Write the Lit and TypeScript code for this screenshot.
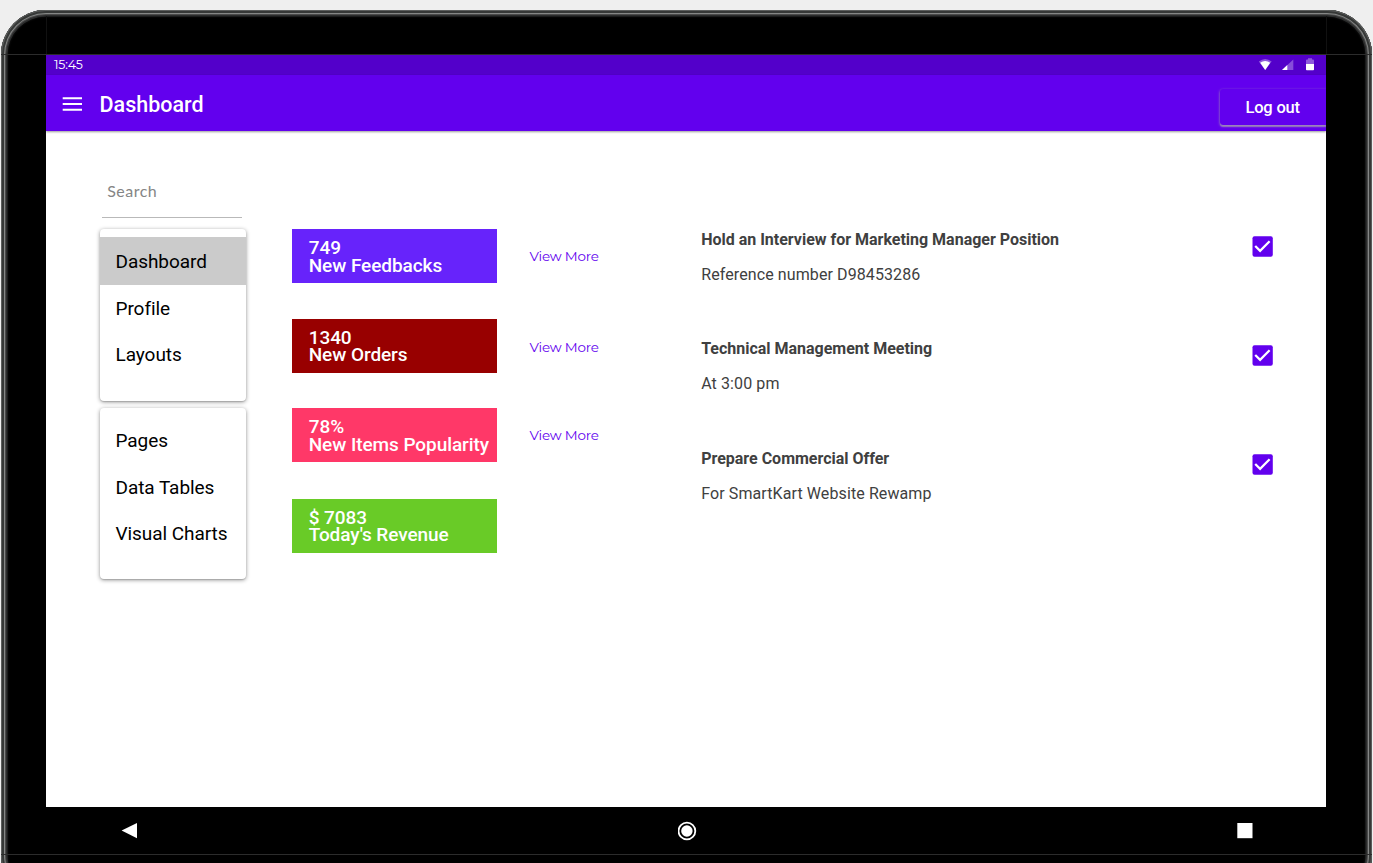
import { LitElement, html, css } from "lit";
import { customElement, property } from "lit/decorators.js";

@customElement("side-menu")
class SideMenu extends LitElement {
  @property({ attribute: false }) items: string[] = [];
  @property() active = "";

  static styles = css`
    :host {
      display: block;
      box-sizing: border-box;
      background: #fff;
      border-radius: 4px;
      box-shadow: 0 1px 4px rgba(0, 0, 0, 0.42), 0 1px 1px rgba(0, 0, 0, 0.12);
    }
    .item {
      height: 46.5px;
      line-height: 48px;
      padding-left: 16px;
      font-size: 19px;
      letter-spacing: -0.06px;
      color: #000;
      white-space: nowrap;
    }
    .item:nth-child(2) { line-height: 47px; }
    .active + .item:nth-child(2) { line-height: 48.2px; }
    .active {
      height: 47.5px;
      line-height: 50px;
      background: #cbcbcb;
    }
  `;

  render() {
    return this.items.map(
      (t) => html`<div class="item ${t === this.active ? "active" : ""}">${t}</div>`
    );
  }
}

@customElement("stat-row")
class StatRow extends LitElement {
  @property() value = "";
  @property() label = "";
  @property() tone = "";
  @property({ type: Boolean }) more = false;

  static styles = css`
    :host {
      display: flex;
      gap: 32.5px;
      align-items: center;
      height: 54px;
    }
    .tile {
      box-sizing: border-box;
      flex: none;
      width: 205px;
      height: 54px;
      padding: 10px 0 0 16.7px;
      font-size: 19px;
      font-weight: 500;
      line-height: 18px;
      letter-spacing: -0.07px;
      color: #fff;
      white-space: nowrap;
    }
    .violet { background: #6723fb; }
    .red { background: #980000; line-height: 17px; }
    .pink { background: #ff3868; }
    .green { background: #69cb27; line-height: 17px; }
    .more {
      font: 13.5px/20px Montserrat, Inter, sans-serif;
      letter-spacing: -0.2px;
      color: #6200ee;
      white-space: nowrap;
    }
    .red + .more { margin-top: 2px; }
  `;

  render() {
    return html`
      <div class="tile ${this.tone}">${this.value}<br />${this.label}</div>
      ${this.more ? html`<span class="more">View More</span>` : ""}
    `;
  }
}

@customElement("task-row")
class TaskRow extends LitElement {
  @property() heading = "";
  @property() note = "";

  static styles = css`
    :host {
      display: flex;
      justify-content: space-between;
      height: 56px;
      color: #404040;
      font-size: 16px;
      white-space: nowrap;
    }
    .title { font-weight: 700; line-height: 21px; letter-spacing: -0.01px; }
    .note { line-height: 21px; margin-top: 14px; letter-spacing: 0.1px; }
    .box { display: block; width: 21px; height: 21px; margin-top: 6.9px; }
    :host(:last-child) .title { margin-top: 1px; }
  `;

  render() {
    return html`
      <div>
        <div class="title">${this.heading}</div>
        <div class="note">${this.note}</div>
      </div>
      <svg class="box" viewBox="0 0 21 21">
        <rect x=".5" y=".3" width="20.3" height="20.4" rx="2" fill="#6200ee" />
        <path d="M3.2 10 8.1 14.8 17.6 5.3" fill="none" stroke="#fff" stroke-width="2.3" />
      </svg>
    `;
  }
}

@customElement("app-root")
class AppRoot extends LitElement {
  static styles = css`
    :host {
      display: block;
      height: 863px;
      overflow: hidden;
      background: #efefef;
      font-family: Roboto, sans-serif;
    }
    .device {
      box-sizing: border-box;
      position: relative;
      width: 1371px;
      height: 890px;
      margin: 10px 0 0 1px;
      padding: 44px 46px 0 45px;
      border-radius: 45px;
      background: #000;
      box-shadow: inset 0 0 0 1px #5c5e5d, inset 0 0 0 3px #363837,
        inset 0 0 0 4px #858786, inset 0 0 0 5px #4a4a4a, inset 0 0 0 6.5px #2b2c2c,
        inset 0 0 2px 7px #101010;
    }
    .page { display: flow-root; }
    .seam { position: absolute; background: #2c2c2c; }
    .seam-top { left: 0; right: 0; top: 44px; height: 1px; }
    .seam-bottom { left: 0; right: 0; top: 844px; height: 1px; }
    .seam-left { left: 45px; top: 6px; width: 1px; height: 38px; background: #111; }
    .seam-right { right: 45px; top: 6px; width: 1px; height: 38px; background: #111; }
    .screen {
      width: 1280px;
      height: 753px;
      overflow: hidden;
      background: #fff;
    }
    .status {
      display: flex;
      align-items: center;
      justify-content: space-between;
      height: 21px;
      padding-left: 8px;
      background: #5300ca;
      border-top: 1px solid #4b25a0;
      box-sizing: border-box;
      color: #fff;
      font: 12.5px/20px Montserrat, Lato, sans-serif;
      letter-spacing: -0.2px;
    }
    .icons { display: block; width: 80px; height: 20px; }
    .bar {
      display: flex;
      height: 56px;
      background: #6200ee;
      color: #fff;
      box-shadow: 0 1px 2px rgba(0, 0, 0, 0.4);
    }
    .burger { width: 21px; height: 18px; margin: 20px 16.5px 0 16px; }
    .heading {
      flex: 1;
      font-size: 21.5px;
      font-weight: 500;
      line-height: 60px;
    }
    .logout {
      width: 106px;
      height: 36px;
      margin-top: 14px;
      box-sizing: border-box;
      padding-left: 25.5px;
      border-radius: 3px 0 0 3px;
      font-size: 16.5px;
      font-weight: 500;
      line-height: 38px;
      letter-spacing: -0.2px;
      box-shadow: 0 1px 3px rgba(170, 165, 175, 0.85), 0 2px 1px rgba(160, 150, 180, 0.6);
    }
    .content {
      display: grid;
      grid-template-columns: 147px 330px 572px;
      padding: 39px 0 0 53px;
    }
    .search {
      box-sizing: border-box;
      width: 140px;
      height: 48px;
      margin: 0 0 11px 3px;
      padding-left: 5.2px;
      border-bottom: 1px solid #b9b9b9;
      font: 16px/42px Lato, sans-serif;
      letter-spacing: 0.5px;
      color: #858585;
    }
    side-menu { margin-left: 0.5px; }
    .menu-a { height: 171.5px; padding-top: 8px; }
    .menu-b { height: 171px; margin-top: 7.5px; padding-top: 9px; }
    .stats { display: flex; flex-direction: column; margin: 59px 0 0 46px; }
    .stats stat-row:nth-child(2) { margin-top: 36px; }
    .stats stat-row:nth-child(3) { margin-top: 35px; }
    .stats stat-row:nth-child(4) { margin-top: 37px; }
    .tasks { display: flex; flex-direction: column; gap: 53px; margin: 59px 0 0 125.2px; width: 572px; }
    .nav {
      display: flex;
      justify-content: space-between;
      align-items: center;
      height: 48px;
      padding: 0 72px 0 75px;
      box-sizing: border-box;
    }
    .nav svg { display: block; }
  `;

  render() {
    return html`
      <div class="page">
        <div class="device">
          <div class="screen">
            <div class="status">
              <span>15:45</span>
              <svg class="icons" viewBox="0 0 80 20">
                <path d="M12.8 6.5Q19.2 1.5 25.6 6.5L19.2 15Z" fill="#fff" opacity=".35" />
                <path d="M14.2 7.8Q19.2 4.4 24.2 7.8L19.2 15Z" fill="#fff" />
                <path d="M47.3 4.4V15H36Z" fill="#fff" opacity=".3" />
                <path d="M41.3 10V15H36Z" fill="#fff" />
                <path d="M60 9V5.4Q60 4.4 61 4.4H62V3.2H66V4.4H67Q68 4.4 68 5.4V9Z" fill="#fff" opacity=".35" />
                <path d="M60 9H68V14.4Q68 15.2 67.2 15.2H60.8Q60 15.2 60 14.4Z" fill="#fff" />
              </svg>
            </div>
            <div class="bar">
              <svg class="burger" viewBox="0 0 21 18">
                <path d="M.7 3.3H20M.7 9H20M.7 14.7H20" stroke="#fff" stroke-width="2" />
              </svg>
              <div class="heading">Dashboard</div>
              <div class="logout">Log out</div>
            </div>
            <div class="content">
              <div>
                <div class="search">Search</div>
                <side-menu class="menu-a" active="Dashboard" .items=${["Dashboard", "Profile", "Layouts"]}></side-menu>
                <side-menu class="menu-b" .items=${["Pages", "Data Tables", "Visual Charts"]}></side-menu>
              </div>
              <div class="stats">
                <stat-row tone="violet" value="749" label="New Feedbacks" more></stat-row>
                <stat-row tone="red" value="1340" label="New Orders" more></stat-row>
                <stat-row tone="pink" value="78%" label="New Items Popularity" more></stat-row>
                <stat-row tone="green" value="$ 7083" label="Today's Revenue"></stat-row>
              </div>
              <div class="tasks">
                <task-row heading="Hold an Interview for Marketing Manager Position" note="Reference number D98453286"></task-row>
                <task-row heading="Technical Management Meeting" note="At 3:00 pm"></task-row>
                <task-row heading="Prepare Commercial Offer" note="For SmartKart Website Rewamp"></task-row>
              </div>
            </div>
          </div>
          <div class="nav">
            <svg width="18" height="16" viewBox="0 0 18 16"><path d="M.6 7.6 16 0V15.2Z" fill="#fff" /></svg>
            <svg width="20" height="20" viewBox="0 0 20 20">
              <circle cx="8.9" cy="10" r="8.4" fill="none" stroke="#fff" stroke-width="1.8" />
              <circle cx="8.9" cy="10" r="5.7" fill="#fff" />
            </svg>
            <svg width="17" height="16" viewBox="0 0 17 16"><path d="M.3 0H15.5V15.2H.3Z" fill="#fff" /></svg>
          </div>
          <div class="seam seam-top"></div>
          <div class="seam seam-bottom"></div>
          <div class="seam seam-left"></div>
          <div class="seam seam-right"></div>
        </div>
      </div>
    `;
  }
}
